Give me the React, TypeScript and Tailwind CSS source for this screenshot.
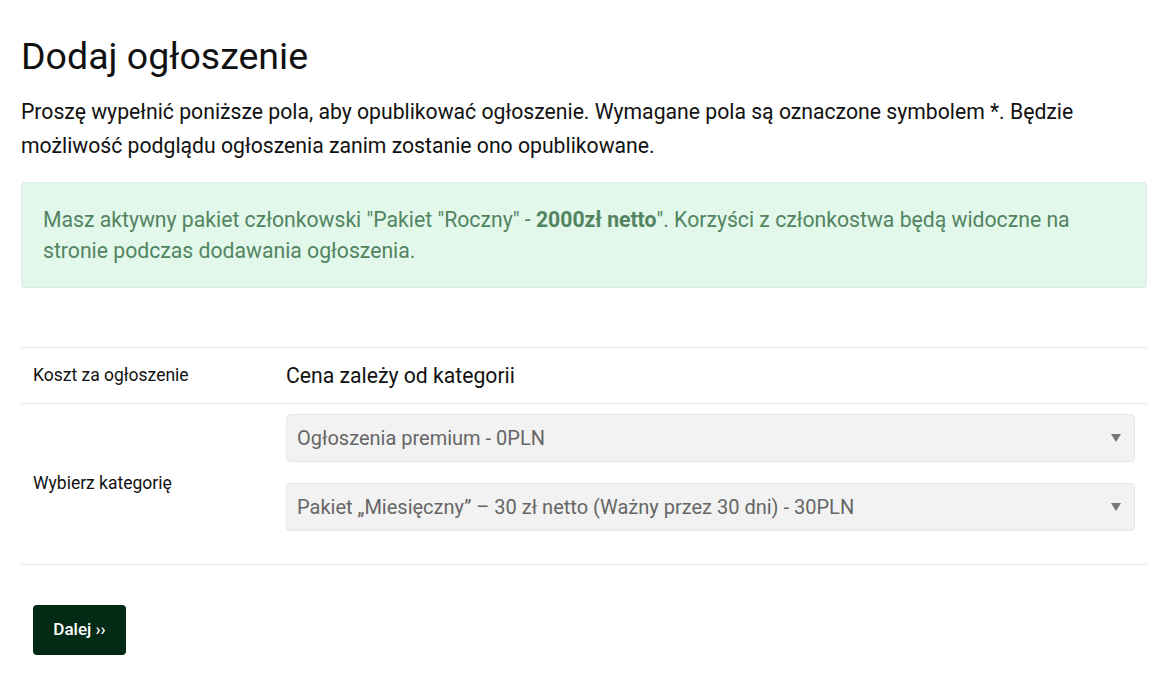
import React from "react";

function Select({ label }: { label: string }) {
  return (
    <div className="flex h-[48px] items-center justify-between rounded-[4px] border border-[#e6e6e6] bg-[#f2f2f2] pl-[10px] pr-[12px] text-[20px] text-[#666666]">
      <span>{label}</span>
      <svg width="10" height="8" viewBox="0 0 10 8" className="mr-[1px]">
        <polygon points="0,0 10,0 5,8" fill="#777777" />
      </svg>
    </div>
  );
}

export default function App() {
  return (
    <div className="min-h-[680px] bg-white px-[21px] pt-[32px] font-['Roboto',sans-serif] text-[#111111]">
      <h1 className="text-[37.5px] leading-[48px] font-normal">Dodaj ogłoszenie</h1>
      <p className="mt-[15px] text-[21.2px] leading-[34px] text-[#111111]">
        Proszę wypełnić poniższe pola, aby opublikować ogłoszenie. Wymagane pola są oznaczone symbolem *. Będzie możliwość podglądu ogłoszenia zanim zostanie ono opublikowane.
      </p>
      <div className="mt-[19px] rounded-[4px] border border-[#d8f1e0] bg-[#e1f8ea] px-[21px] pt-[21px] pb-[21px] text-[21.2px] leading-[31px] text-[#538461]">
        Masz aktywny pakiet członkowski "Pakiet "Roczny" - <b className="font-bold">2000zł netto</b>". Korzyści z członkostwa będą widoczne na stronie podczas dodawania ogłoszenia.
      </div>
      <div className="mt-[59px] border-t border-[#e8e8e8]">
        <div className="flex h-[56px] items-center border-b border-[#e8e8e8]">
          <div className="w-[265px] pl-[12px] text-[17.5px]">Koszt za ogłoszenie</div>
          <div className="text-[21.2px]">Cena zależy od kategorii</div>
        </div>
        <div className="flex items-center border-b border-[#e8e8e8] pt-[10px] pb-[33px]">
          <div className="w-[265px] pl-[12px] pt-[22px] text-[17.5px]">Wybierz kategorię</div>
          <div className="flex flex-1 flex-col gap-[21px] pr-[12px]">
            <Select label="Ogłoszenia premium - 0PLN" />
            <Select label="Pakiet „Miesięczny” – 30 zł netto (Ważny przez 30 dni) - 30PLN" />
          </div>
        </div>
      </div>
      <div className="mt-[40px] pl-[12px]">
        <button className="h-[50px] w-[93px] rounded-[4px] bg-[#022a14] text-[17px] font-medium text-white">
          Dalej ››
        </button>
      </div>
    </div>
  );
}
